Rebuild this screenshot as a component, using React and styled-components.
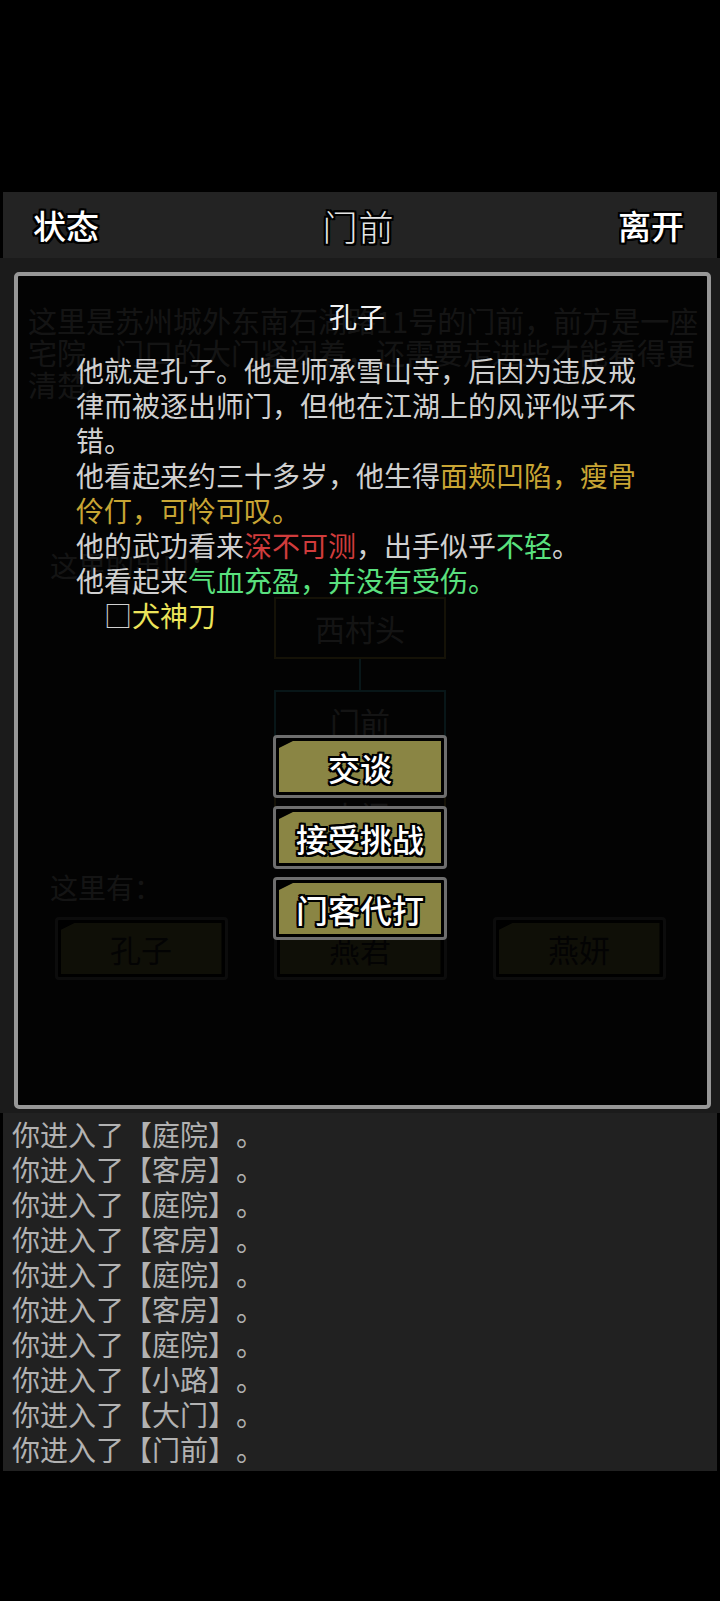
import React from 'react';
import styled, { createGlobalStyle, css } from 'styled-components';

const FONT = `"Noto Sans CJK SC", "Noto Sans", sans-serif`;

const GlobalStyle = createGlobalStyle`
  html, body {
    margin: 0;
    padding: 0;
    background: #000;
  }
  body {
    font-family: ${FONT};
    text-spacing-trim: space-all;
  }
  * { box-sizing: border-box; }
`;

const outline = (w = 2) => css`
  text-shadow:
    ${-w}px ${-w}px 0 #000, ${w}px ${-w}px 0 #000,
    ${-w}px ${w}px 0 #000, ${w}px ${w}px 0 #000,
    0 ${-w}px 0 #000, 0 ${w}px 0 #000,
    ${-w}px 0 0 #000, ${w}px 0 0 #000,
    ${-w / 2}px ${-w}px 0 #000, ${w / 2}px ${w}px 0 #000,
    ${-w}px ${w / 2}px 0 #000, ${w}px ${-w / 2}px 0 #000;
`;

const Page = styled.div`
  width: 720px;
  min-height: 1601px;
  background: #000;
  display: flex;
  flex-direction: column;
  font-family: ${FONT};
  text-spacing-trim: space-all;
`;

const TopGap = styled.div`
  height: 192px;
`;

const Header = styled.header`
  margin: 0 3px;
  height: 66px;
  background: #232323;
  display: grid;
  grid-template-columns: 1fr auto 1fr;
  align-items: center;
  padding: 0 33px 0 30px;
`;

const HeaderButton = styled.span`
  font-size: 33px;
  font-weight: 500;
  line-height: 1;
  color: #fff;
  justify-self: ${(p) => (p.$right ? 'end' : 'start')};
  ${outline(2)}
`;

const HeaderTitle = styled.span`
  font-size: 35px;
  font-weight: 300;
  line-height: 1;
  color: #e4e4e4;
  letter-spacing: 1px;
  ${outline(2)}
`;

const Stage = styled.div`
  position: relative;
  height: 855px;
  background: #1b1b1b;
`;

const Scene = styled.div`
  display: flex;
  flex-direction: column;
  padding-top: 46px;
`;

const Description = styled.div`
  padding-left: 28px;
  font-size: 29px;
  line-height: 32px;
  color: #b8b8b8;
`;

const DescLine = styled.div`
  white-space: nowrap;
`;

const SectionLabel = styled.div`
  padding-left: 50px;
  margin-top: ${(p) => p.$top}px;
  font-size: 28px;
  line-height: 32px;
  color: #b8b8b8;
`;

const MapColumn = styled.div`
  margin-top: 16px;
  display: flex;
  flex-direction: column;
  align-items: center;
`;

const MapBox = styled.div`
  width: 172px;
  height: 62px;
  border: 2px solid ${(p) => (p.$current ? '#4cc6dc' : '#c2a440')};
  display: flex;
  align-items: center;
  justify-content: center;
  font-size: 30px;
  color: #b8b8b8;
`;

const Connector = styled.div`
  width: 2px;
  height: ${(p) => p.$h}px;
  background: ${(p) => p.$color};
`;

const NpcRow = styled.div`
  margin-top: 14px;
  display: flex;
  justify-content: center;
  gap: 46px;
`;

const ButtonFrame = styled.div`
  width: ${(p) => p.$w || 174}px;
  height: 63px;
  border: 3px solid #6e6e6e;
  border-radius: 4px;
  padding: 3px;
  background: #000;
  display: flex;
`;

const ButtonFace = styled.div`
  flex: 1;
  background: #8a8544;
  clip-path: polygon(0 7px, 14px 0, 100% 0, 100% 100%, 0 100%);
  display: flex;
  align-items: center;
  justify-content: center;
`;

const ButtonLabel = styled.span`
  font-size: 32px;
  font-weight: 500;
  line-height: 1;
  color: #fff;
  ${outline(2)}
`;

const NpcLabel = styled.span`
  font-size: 31px;
  line-height: 1;
  color: #202020;
`;

const Modal = styled.div`
  position: absolute;
  top: 14px;
  left: 14px;
  right: 9px;
  bottom: 4px;
  border: 4px solid #979797;
  border-radius: 5px;
  background: rgba(0, 0, 0, 0.89);
  display: flex;
  flex-direction: column;
  padding: 22px 0 0 58px;
`;

const ModalTitle = styled.div`
  width: 562px;
  text-align: center;
  font-size: 28px;
  line-height: 36px;
  color: #f2f2f2;
`;

const ModalBody = styled.div`
  margin-top: 19px;
  width: 562px;
  font-size: 28px;
  line-height: 35px;
  color: #d0d0d0;
`;

const Para = styled.p`
  margin: 0;
  padding-left: ${(p) => (p.$indent ? 28 : 0)}px;
`;

const Tone = styled.span`
  color: ${(p) => p.$c};
`;

const ActionColumn = styled.div`
  margin: 102px 0 0 197px;
  display: flex;
  flex-direction: column;
  gap: 8px;
`;

const Log = styled.div`
  margin: 0 3px;
  background: #212121;
  padding: 4px 9px;
  display: flex;
  flex-direction: column;
`;

const LogLine = styled.div`
  font-size: 28px;
  line-height: 35px;
  color: #b2b2b2;
  white-space: nowrap;
`;

const GameButton = ({ children, width }) => (
  <ButtonFrame $w={width}>
    <ButtonFace>
      <ButtonLabel>{children}</ButtonLabel>
    </ButtonFace>
  </ButtonFrame>
);

const NpcButton = ({ children }) => (
  <ButtonFrame $w={173}>
    <ButtonFace>
      <NpcLabel>{children}</NpcLabel>
    </ButtonFace>
  </ButtonFrame>
);

const GOLD = '#c8a534';
const RED = '#d03c3c';
const GREEN = '#5ae07e';
const YELLOW = '#ece45a';

const logRooms = ['庭院', '客房', '庭院', '客房', '庭院', '客房', '庭院', '小路', '大门', '门前'];

export default function App() {
  return (
    <>
      <GlobalStyle />
      <Page>
        <TopGap />
        <Header>
          <HeaderButton>状态</HeaderButton>
          <HeaderTitle>门前</HeaderTitle>
          <HeaderButton $right>离开</HeaderButton>
        </Header>

        <Stage>
          <Scene>
            <Description>
              <DescLine>这里是苏州城外东南石湖路11号的门前，前方是一座</DescLine>
              <DescLine>宅院，门口的大门紧闭着，还需要走进些才能看得更</DescLine>
              <DescLine>清楚。</DescLine>
            </Description>
            <SectionLabel $top={149}>这里的出口：</SectionLabel>
            <MapColumn>
              <MapBox>西村头</MapBox>
              <Connector $h={31} $color="#4cc6dc" />
              <MapBox $current>门前</MapBox>
              <Connector $h={32} $color="#4cc6dc" />
              <MapBox>大门</MapBox>
            </MapColumn>
            <SectionLabel $top={25}>这里有：</SectionLabel>
            <NpcRow>
              <NpcButton>孔子</NpcButton>
              <NpcButton>燕君</NpcButton>
              <NpcButton>燕妍</NpcButton>
            </NpcRow>
          </Scene>

          <Modal>
            <ModalTitle>孔子</ModalTitle>
            <ModalBody>
              <Para>他就是孔子。他是师承雪山寺，后因为违反戒律而被逐出师门，但他在江湖上的风评似乎不错。</Para>
              <Para>
                他看起来约三十多岁，他生得<Tone $c={GOLD}>面颊凹陷，瘦骨伶仃，可怜可叹。</Tone>
              </Para>
              <Para>
                他的武功看来<Tone $c={RED}>深不可测</Tone>，出手似乎<Tone $c={GREEN}>不轻</Tone>。
              </Para>
              <Para>
                他看起来<Tone $c={GREEN}>气血充盈，并没有受伤。</Tone>
              </Para>
              <Para $indent>
                □<Tone $c={YELLOW}>犬神刀</Tone>
              </Para>
            </ModalBody>
            <ActionColumn>
              <GameButton>交谈</GameButton>
              <GameButton>接受挑战</GameButton>
              <GameButton>门客代打</GameButton>
            </ActionColumn>
          </Modal>
        </Stage>

        <Log>
          {logRooms.map((room, i) => (
            <LogLine key={i}>你进入了【{room}】。</LogLine>
          ))}
        </Log>
      </Page>
    </>
  );
}
